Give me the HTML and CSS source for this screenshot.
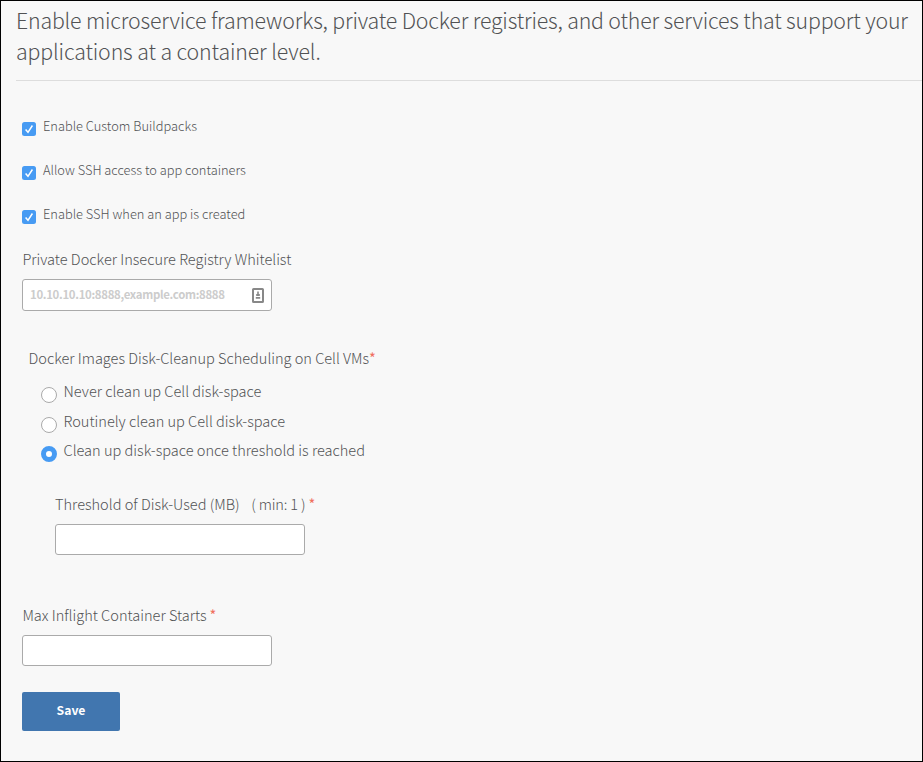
FILE: index.html
```html
<!DOCTYPE html>
<html lang="en">
<head>
<meta charset="utf-8">
<title>Application Containers</title>
<link rel="stylesheet" href="styles.css">
</head>
<body>
<main class="page">
  <h1 class="intro"><span>Enable microservice frameworks, private Docker registries, and other services that support your</span><br><span class="second">applications at a container level.</span></h1>
  <form class="form">
    <label class="check"><svg class="check-box" viewBox="0 0 14 14"><rect width="14" height="14" rx="2.5"/><path d="M3.600 7.500 6 10.300 10.400 3.500"/></svg><span>Enable Custom Buildpacks</span></label>
    <label class="check"><svg class="check-box" viewBox="0 0 14 14"><rect width="14" height="14" rx="2.5"/><path d="M3.600 7.500 6 10.300 10.400 3.500"/></svg><span>Allow SSH access to app containers</span></label>
    <label class="check"><svg class="check-box" viewBox="0 0 14 14"><rect width="14" height="14" rx="2.5"/><path d="M3.600 7.500 6 10.300 10.400 3.500"/></svg><span>Enable SSH when an app is created</span></label>
    <section class="field registry">
      <label class="label"><span>Private Docker Insecure Registry Whitelist</span></label>
      <div class="input input-tall"><span class="placeholder">10.10.10.10:8888,example.com:8888</span>
        <svg class="key" viewBox="0 0 12 15"><rect x="1" y="1" width="10" height="13" rx=".6"/><path d="M5.200 3.500h1.600v2.500h1V8H4.200V6h1zM3.800 9h4.400v1.800H3.800z"/></svg>
      </div>
    </section>
    <fieldset class="cleanup">
      <div class="label"><span>Docker Images Disk-Cleanup Scheduling on Cell VMs</span><b class="req">*</b></div>
      <label class="radio first"><i class="dot"></i><span>Never clean up Cell disk-space</span></label>
      <label class="radio"><i class="dot"></i><span>Routinely clean up Cell disk-space</span></label>
      <label class="radio last"><i class="dot on"></i><span>Clean up disk-space once threshold is reached</span></label>
      <div class="field threshold">
        <div class="label"><span>Threshold of Disk-Used (MB)</span><span class="hint">( min: 1 )</span><b class="req gap">*</b></div>
        <div class="input"></div>
      </div>
    </fieldset>
    <section class="field inflight">
      <div class="label"><span>Max Inflight Container Starts</span><b class="req gap">*</b></div>
      <div class="input"></div>
    </section>
    <button class="save" type="button"><span>Save</span></button>
  </form>
</main>
</body>
</html>
```
FILE: styles.css
```css
* { box-sizing: border-box; }
body { margin: 0; background: #f8f8f8; color: #515254; font-family: "Noto Sans CJK SC", sans-serif; font-weight: 300; }
.page { height: 762px; border: 1px solid #000; padding: 3px 0 0 15px; }
.intro { margin: 0; height: 77px; border-bottom: 1px solid #ddd; font-size: 21.3px; line-height: 31px; font-weight: 300; letter-spacing: -.17px; white-space: nowrap; }
.second { letter-spacing: -.13px; }
.form { padding: 23px 0 0 6px; }
.check { display: flex; height: 44px; font-size: 12.83px; line-height: 44px; }
.check-box { width: 14px; height: 14px; margin: 18px 7px 0 0; fill: #479bf3; }
.check-box path { fill: none; stroke: #fff; stroke-width: 1.5; }
.label { display: block; height: 20px; font-size: 14.57px; line-height: 20px; white-space: pre; }
.input { display: flex; align-items: center; justify-content: space-between; width: 250px; height: 31px; padding: 0 7px; border: 1px solid #aaa; border-radius: 3px; background: #fff; }
.registry { padding-top: 13px; }
.registry .label { margin-bottom: 10px; padding-left: .4px; }
.input-tall { height: 32px; }
.placeholder { color: #ccc; font-size: 11.4px; font-weight: 700; letter-spacing: -.31px; line-height: 20px; margin-top: -2px; }
.key { width: 12px; height: 15px; fill: #888; }
.key rect { fill: none; stroke: #888; stroke-width: 2; }
.cleanup { margin: 37px 0 0; padding: 0 0 0 7px; border: 0; }
.cleanup > .label { margin-left: -.5px; letter-spacing: -.01px; }
.radio { display: flex; height: 30px; margin-left: 12px; font-size: 14.57px; line-height: 20px; }
.radio.first { margin-top: 13px; }
.radio:nth-of-type(2) { height: 29px; }
.dot { width: 16px; height: 16px; margin: 6px 7px 0 0; border: 1px solid #aaa; border-radius: 50%; background: #fff; }
.dot + span { margin-left: -.5px; }
.dot.on { border: 5px solid #479bf3; }
.threshold { padding: 24px 0 0 26px; }
.threshold .label, .inflight .label { margin-bottom: 10px; }
.hint { margin-left: 11.5px; letter-spacing: -.15px; }
.req { color: #f0705f; font-weight: 400; }
.gap { margin-left: 3px; }
.inflight { margin-top: 50px; }
.inflight .label { padding-left: .4px; }
.save { display: block; width: 98px; height: 39px; margin-top: 26px; padding: 0 0 3px; border: 0; border-radius: 2px; background: #4176af; color: #fff; font: 700 12.2px "Noto Sans CJK SC", sans-serif; }
```
